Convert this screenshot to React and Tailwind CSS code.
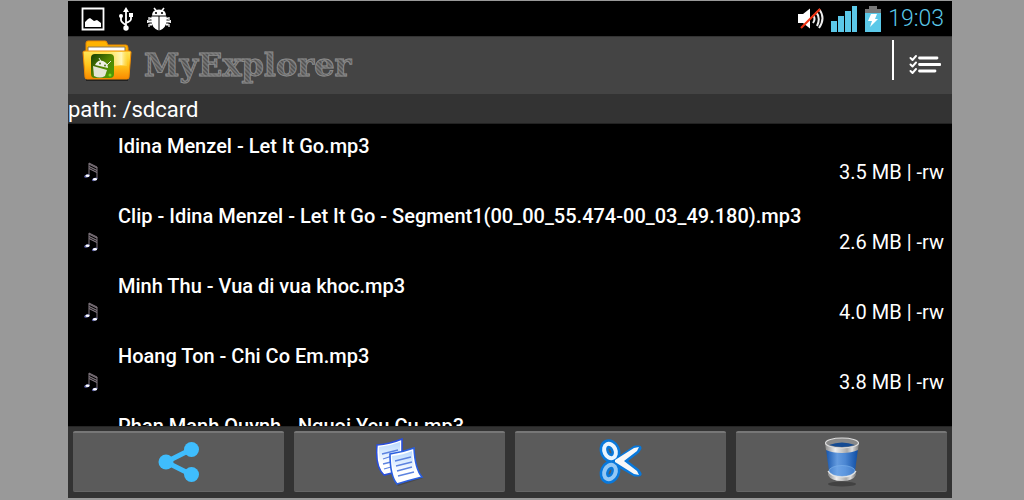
import React from "react";

const files = [
  { name: "Idina Menzel - Let It Go.mp3", info: "3.5 MB | -rw" },
  { name: "Clip - Idina Menzel - Let It Go - Segment1(00_00_55.474-00_03_49.180).mp3", info: "2.6 MB | -rw" },
  { name: "Minh Thu - Vua di vua khoc.mp3", info: "4.0 MB | -rw" },
  { name: "Hoang Ton - Chi Co Em.mp3", info: "3.8 MB | -rw" },
  { name: "Phan Manh Quynh - Nguoi Yeu Cu.mp3", info: "" },
];

const PictureIcon = () => (
  <svg width="24" height="24" viewBox="0 0 24 24">
    <path d="M1.500 1.500h21v21h-21z" fill="none" stroke="#fff" strokeWidth="1.800" />
    <path d="M4 20v-5l3-3 2-1 4 3 3-1 4 3v4z" fill="#fff" />
  </svg>
);

const UsbIcon = () => (
  <svg width="14" height="24" viewBox="0 0 14 24">
    <path d="M7 4v16M2 9v4q0 2 5 5M12 9v3q0 2-5 4" fill="none" stroke="#fff" strokeWidth="1.800" />
    <path d="M7 0l3 5H4zM10 6h4v4h-4z" fill="#fff" />
    <circle cx="2" cy="9" r="2" fill="#fff" />
    <circle cx="7" cy="21" r="2.700" fill="#fff" />
  </svg>
);

const BugIcon = () => (
  <svg width="24" height="24" viewBox="0 0 24 24">
    <path d="M7 1l2.500 3M17 1l-2.500 3" stroke="#fff" strokeWidth="1.600" />
    <path d="M5 8.500Q5 2.500 12 2.500t7 6zM4.500 9.500h7V23.500Q4.500 21 4.500 13zM12.500 9.500h7V13q0 8-7 10.500z" fill="#fff" />
    <path d="M5 11.500H2.500M19 11.500h2.500M5 14.500H1M19 14.500h4M5 17.500H2.500M19 17.500h2.500" fill="none" stroke="#fff" strokeWidth="1.800" />
    <path d="M2 10v3M22 10v3M.7 13v3M23.300 13v3M2 17v3M22 17v3" stroke="#fff" strokeWidth="1.200" />
    <circle cx="9" cy="6" r="1.100" />
    <circle cx="15" cy="6" r="1.100" />
  </svg>
);

const MuteIcon = () => (
  <svg width="27" height="22" viewBox="0 0 27 22">
    <path d="M1 6h5l7-5.500v20L6 15H1z" fill="#fff" />
    <path d="M16 7q3 4 0 8M19 4q5 6 1 14M22 1q7 9 0 19" fill="none" stroke="#eee" strokeWidth="2" />
    <path d="M4 20L23 1" stroke="#f13312" strokeWidth="2.200" />
  </svg>
);

const SignalIcon = () => (
  <svg width="27" height="26" viewBox="0 0 27 26" fill="#5bc8e8">
    <path d="M0 15h6v11H0zM7 10h6v16H7zM14 5h6v21h-6zM21 0h5v26h-5z" />
  </svg>
);

const BatteryIcon = () => (
  <svg width="16" height="26" viewBox="0 0 16 26">
    <path d="M4 0h8v3h4v5H0V3h4z" fill="#777" />
    <path d="M0 7h16v19H0z" fill="#5bc8e8" />
    <path d="M6 8h6l-2 5h3l-8 8 2-6H3z" fill="#fff" />
  </svg>
);

const FolderIcon = () => (
  <svg width="50" height="42" viewBox="0 0 50 42">
    <defs>
      <linearGradient id="front" x1="0" y1="0" x2="0" y2="1">
        <stop offset="0" stopColor="#ffe75a" />
        <stop offset="0.5" stopColor="#ffc51c" />
        <stop offset="1" stopColor="#f98a00" />
      </linearGradient>
      <linearGradient id="shine" x1="0" y1="0" x2="1" y2="0">
        <stop offset="0" stopColor="#fff3a0" stopOpacity="0" />
        <stop offset="0.7" stopColor="#fff6b8" />
        <stop offset="1" stopColor="#ffd83a" stopOpacity="0.3" />
      </linearGradient>
      <linearGradient id="badge" x1="0" y1="0" x2="1" y2="1">
        <stop offset="0" stopColor="#173d05" />
        <stop offset="0.5" stopColor="#548500" />
        <stop offset="1" stopColor="#4a9e08" />
      </linearGradient>
    </defs>
    <path d="M4 40h42" stroke="#222" strokeWidth="2" />
    <path d="M4 3q0-2 2-2h17q2 0 2 2l1 2h18q2 0 2 3v20H4z" fill="#ffb300" stroke="#ed8a00" />
    <path d="M6 7h37v6H6z" fill="#fff" stroke="#8a7550" />
    <path d="M1 12q0-1 2-1h44q2 0 2 1l-2 25q0 2-2 2H5q-2 0-2-2z" fill="url(#front)" stroke="#f18b00" />
    <path d="M24 12h22l-1 14q-9-2-21 2z" fill="url(#shine)" />
    <rect x="9" y="14" width="23" height="24" rx="4" fill="url(#badge)" />
    <path d="M17 18l3 5M29 21l-4 4" stroke="#e8ecd8" />
    <path d="M13 25q3-6 8-4t5 7z" fill="#eff1e5" />
    <path d="M11 26l14 4-2 6q-5 3-11 0z" fill="#e3e6d4" />
    <circle cx="18" cy="23.500" r="0.900" fill="#486f10" />
    <circle cx="23" cy="25.500" r="0.900" fill="#486f10" />
    <circle cx="28" cy="35" r="1.500" fill="#81d920" />
  </svg>
);

const ChecklistIcon = () => (
  <svg width="32" height="20" viewBox="0 0 32 20" fill="none" stroke="#fff" strokeLinecap="round" strokeLinejoin="round">
    <path d="M10.500 4h17.500M10.500 10.500h20.500M10.500 17h15.500" strokeWidth="2.800" />
    <path d="M1.500 4l2 2 3.500-4M1.500 10.500l2 2 3.500-4M1.500 17l2 2 3.500-4" strokeWidth="1.900" />
  </svg>
);

const NoteIcon = () => (
  <svg width="14" height="20" viewBox="0 0 14 20">
    <path d="M5 14V1l8 4v12" fill="none" stroke="#81777f" strokeWidth="1" />
    <path d="M5 2l8 4M5 4.500l8 4M5 6.500l8 4" stroke="#81777f" strokeWidth="1.200" />
    <ellipse cx="3" cy="14" rx="3" ry="1.500" fill="#5960a5" transform="rotate(-20 3 14)" />
    <ellipse cx="3.500" cy="13.800" rx="2" ry="1.200" fill="#fff" />
    <ellipse cx="10.500" cy="17.500" rx="3" ry="1.500" fill="#5960a5" transform="rotate(-20 10 17)" />
    <ellipse cx="11" cy="17.200" rx="2" ry="1.200" fill="#fff" />
  </svg>
);

const ShareIcon = () => (
  <svg width="42" height="42" viewBox="0 0 42 42" fill="#3fbdfd">
    <path d="M34 8L8 21l26 13" fill="none" stroke="#3fbdfd" strokeWidth="5" />
    <circle cx="33.500" cy="8.500" r="7.500" />
    <circle cx="8" cy="21" r="7.500" />
    <circle cx="33.500" cy="33.500" r="7.500" />
  </svg>
);

const CopyIcon = () => (
  <svg width="48" height="48" viewBox="0 0 48 48">
    <defs>
      <linearGradient id="sheet" x1="0" y1="0" x2="0" y2="1">
        <stop offset="0" stopColor="#b8d9ff" />
        <stop offset="0.7" stopColor="#fff" />
      </linearGradient>
    </defs>
    <path d="M1 7Q14 6 26 1v26l-10 8q-4 1-8 2Q-1 29 1 7z" fill="#fff" stroke="#2a4fdc" strokeWidth="1.600" />
    <path d="M3 9q11-1 21-5v22l-11 7-5 2Q2 28 3 9z" fill="url(#sheet)" />
    <path d="M6 16l16-4M7 21l9-3M7 26l8-2M8 31l7-2" stroke="#5c83e0" strokeWidth="1.300" />
    <path d="M15 18Q28 16 39 12q0 20 8 28-12 4-25 8-7-8-7-30z" fill="#333" opacity="0.400" />
    <path d="M14 16Q27 14 38 10q1 21 8 29-12 3-25 7-7-8-7-30z" fill="#fff" stroke="#2a5fe0" strokeWidth="1.600" />
    <path d="M16 18q11-1 20-5 1 18 6 25l-20 5q-6-8-6-25z" fill="url(#sheet)" />
    <path d="M19 23l16-4M20 28l16-4M21 33l15-4M22 38l16-4" stroke="#5c83e0" strokeWidth="1.300" />
  </svg>
);

const CutIcon = () => (
  <svg width="44" height="46" viewBox="0 0 44 46" fill="none">
    <g stroke="#0878db">
      <ellipse cx="11" cy="12" rx="5.500" ry="7.500" strokeWidth="9" transform="rotate(-25 11 12)" />
      <ellipse cx="11" cy="33" rx="5.500" ry="7.500" strokeWidth="9" transform="rotate(25 11 33)" />
      <path d="M17 22L36 9h4l-2 3-13 10 13 10 2 3h-4L17 24z" fill="#0878db" strokeWidth="5" strokeLinejoin="round" />
    </g>
    <ellipse cx="11" cy="12" rx="5.500" ry="7.500" stroke="#eaf5ff" strokeWidth="4" transform="rotate(-25 11 12)" />
    <ellipse cx="11" cy="33" rx="5.500" ry="7.500" stroke="#93c8f5" strokeWidth="4" transform="rotate(25 11 33)" />
    <path d="M16 21L35 9l5-1-2 4-13 10 13 10 2 4-5-1-19-12z" fill="#f8f8f8" />
  </svg>
);

const TrashIcon = () => (
  <svg width="36" height="50" viewBox="0 0 36 50">
    <defs>
      <linearGradient id="glass" x1="0" y1="0" x2="1" y2="0">
        <stop offset="0" stopColor="#1655ac" />
        <stop offset="0.350" stopColor="#649bdf" />
        <stop offset="0.600" stopColor="#4c87d3" />
        <stop offset="1" stopColor="#0e4da4" />
      </linearGradient>
      <linearGradient id="metal" x1="0" y1="0" x2="1" y2="0">
        <stop offset="0" stopColor="#888" />
        <stop offset="0.300" stopColor="#eee" />
        <stop offset="0.650" stopColor="#aaa" />
        <stop offset="0.800" stopColor="#ddd" />
        <stop offset="1" stopColor="#777" />
      </linearGradient>
    </defs>
    <ellipse cx="18" cy="47" rx="14" ry="2.500" fill="#424242" />
    <path d="M4 34v4q3 6 14 6t14-6v-4z" fill="url(#metal)" />
    <path d="M2 12h32l-3 22q-3 5-13 5T5 34z" fill="url(#glass)" />
    <ellipse cx="18" cy="34" rx="13" ry="5.500" fill="#78aff0" fillOpacity="0.400" stroke="#7eb3ed" strokeWidth="0.600" />
    <path d="M4 34q3 6 14 6t14-6" fill="none" stroke="#e5e5e5" strokeWidth="1.200" />
    <path d="M1 6l1 7q6 3 16 3t16-3l1-7z" fill="url(#metal)" />
    <ellipse cx="18" cy="6" rx="16.500" ry="5" fill="#888" stroke="#ddd" strokeWidth="1.200" />
    <path d="M5 8q13-5 26 0-13 4-26 0z" fill="#144a92" />
  </svg>
);

const actions = [
  { label: "Share", Icon: ShareIcon },
  { label: "Copy", Icon: CopyIcon },
  { label: "Cut", Icon: CutIcon },
  { label: "Delete", Icon: TrashIcon },
];

export default function App() {
  return (
    <div className="h-screen bg-[#999] pt-px pb-0.5 pl-[68px] pr-[72px] font-[Roboto,sans-serif]">
      <div className="flex h-full flex-col bg-black text-white">
        <div className="flex h-[35px] shrink-0 items-center justify-between pl-[13px] pr-2">
          <div className="flex items-center gap-[14px]">
            <PictureIcon />
            <UsbIcon />
            <BugIcon />
          </div>
          <div className="flex items-center gap-[7px]">
            <MuteIcon />
            <SignalIcon />
            <BatteryIcon />
            <time className="text-[23px] leading-8 font-light text-[#5bc8e8]">19:03</time>
          </div>
        </div>

        <header className="flex h-[58px] shrink-0 items-start justify-between border-t border-[#333] bg-[#444] pl-[14px] pr-[11px] pt-[3px]">
          <div className="flex items-start gap-3">
            <FolderIcon />
            <h1 className="bg-[repeating-linear-gradient(45deg,#555_0px,#555_1px,#777_2px,#666_3px)] bg-clip-text font-['DejaVu_Serif',serif] text-[32px] leading-[50px] font-bold text-transparent [-webkit-text-stroke:1px_#8a8a8a]">MyExplorer</h1>
          </div>
          <div className="flex items-center gap-[15px]">
            <div className="h-10 w-0.5 bg-white" />
            <button aria-label="Select files" className="pt-2">
              <ChecklistIcon />
            </button>
          </div>
        </header>

        <div className="h-[30px] shrink-0 border-b border-[#222] bg-[#333] text-[22px] leading-8">path: /sdcard</div>

        <ul className="min-h-0 flex-1 overflow-hidden pt-2">
          {files.map((f) => (
            <li key={f.name} className="flex h-[70px] gap-[19px] pl-4 pr-2">
              <div className="w-[15px] shrink-0 pt-[30px]"><NoteIcon /></div>
              <div className="flex-1 whitespace-nowrap">
                <p className="text-xl leading-7 font-medium">{f.name}</p>
                <p className="text-right text-xl leading-6">{f.info}</p>
              </div>
            </li>
          ))}
        </ul>

        <div className="grid h-[72px] shrink-0 grid-cols-4 gap-[10px] border-t border-[#262626] bg-[#333] px-[5px] pt-1 pb-[6px]">
          {actions.map(({ label, Icon }) => (
            <button key={label} aria-label={label} className="flex items-center justify-center rounded-xs border-t-2 border-b border-t-[#777] border-b-[#666] bg-[#5b5b5b]">
              <Icon />
            </button>
          ))}
        </div>
      </div>
    </div>
  );
}
